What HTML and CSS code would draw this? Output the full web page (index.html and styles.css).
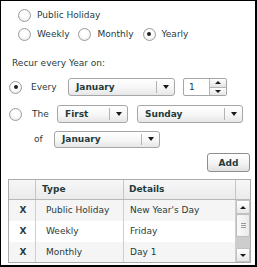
FILE: index.html
```html
<!DOCTYPE html>
<html>
<head>
<meta charset="utf-8">
<link rel="stylesheet" href="styles.css">
</head>
<body>
<div class="frame">
  <div class="opt-row r1">
    <label class="opt"><span class="radio"></span><span>Public Holiday</span></label>
  </div>
  <div class="opt-row r2">
    <label class="opt"><span class="radio"></span><span>Weekly</span></label>
    <label class="opt"><span class="radio"></span><span>Monthly</span></label>
    <label class="opt"><span class="radio checked"></span><span>Yearly</span></label>
  </div>
  <div class="recur">Recur every Year on:</div>
  <div class="line every">
    <span class="radio checked"></span>
    <span class="lbl lbl-every">Every</span>
    <div class="select w-month1"><span class="sel-text">January</span><span class="sel-div"></span><span class="sel-arrow"><i class="tri-down"></i></span></div>
    <div class="spinner"><span class="spin-text">1</span><span class="spin-btns"><span class="spin-up"><i class="tri-up"></i></span><span class="spin-down"><i class="tri-down"></i></span></span></div>
  </div>
  <div class="line the">
    <span class="radio"></span>
    <span class="lbl lbl-the">The</span>
    <div class="select w-first"><span class="sel-text">First</span><span class="sel-div"></span><span class="sel-arrow"><i class="tri-down"></i></span></div>
    <div class="select w-day"><span class="sel-text">Sunday</span><span class="sel-div"></span><span class="sel-arrow"><i class="tri-down"></i></span></div>
  </div>
  <div class="line of">
    <span class="lbl lbl-of">of</span>
    <div class="select w-month2"><span class="sel-text">January</span><span class="sel-div"></span><span class="sel-arrow"><i class="tri-down"></i></span></div>
  </div>
  <div class="add-row"><button class="btn">Add</button></div>
  <div class="grid">
    <div class="head">
      <div class="hc c1"></div>
      <div class="hc c2">Type</div>
      <div class="hc c3">Details</div>
      <div class="hc c4"></div>
    </div>
    <div class="body">
      <div class="rows">
        <div class="row odd"><div class="c c1">X</div><div class="c c2">Public Holiday</div><div class="c c3">New Year's Day</div></div>
        <div class="row"><div class="c c1">X</div><div class="c c2">Weekly</div><div class="c c3">Friday</div></div>
        <div class="row odd"><div class="c c1">X</div><div class="c c2">Monthly</div><div class="c c3">Day 1</div></div>
      </div>
      <div class="sbar">
        <div class="sb-btn"><i class="tri-up"></i></div>
        <div class="sb-thumb"><span class="grip"></span><span class="grip"></span><span class="grip"></span></div>
        <div class="sb-track"></div>
        <div class="sb-btn"><i class="tri-down"></i></div>
      </div>
    </div>
  </div>
</div>
</body>
</html>
```
FILE: styles.css
```css
* { box-sizing: border-box; }
html, body { margin: 0; padding: 0; background: #fff; }
body {
  font-family: "DejaVu Sans", Verdana, sans-serif;
  font-size: 9px;
  color: #1f3b3c;
}
.frame {
  width: 257px;
  height: 267px;
  border: 1px solid #000;
  border-right-width: 2px;
  border-bottom-width: 2px;
  background: #fff;
  display: flex;
  flex-direction: column;
  overflow: hidden;
}
.radio {
  display: inline-block;
  flex: none;
  width: 13px;
  height: 13px;
  border-radius: 50%;
  border: 1px solid #9c9c9c;
  background: radial-gradient(circle at 50% 40%, #ffffff 35%, #e4e4e4 100%);
  position: relative;
}
.radio.checked::after {
  content: "";
  position: absolute;
  left: 3.5px;
  top: 3.5px;
  width: 4px;
  height: 4px;
  border-radius: 50%;
  background: #222;
}
.opt-row {
  display: flex;
  align-items: center;
  height: 18px;
  padding-left: 17px;
}
.r1 { margin-top: 5px; }
.r2 { margin-top: 1px; }
.opt {
  display: flex;
  align-items: center;
  gap: 6px;
  margin-right: 9px;
}
.recur {
  margin-top: 12px;
  height: 16px;
  line-height: 16px;
  padding-left: 11px;
}
.line {
  display: flex;
  align-items: center;
  height: 18px;
  padding-left: 8px;
}
.every { margin-top: 7px; }
.the { margin-top: 9px; }
.of { margin-top: 7px; }
.lbl { flex: none; }
.lbl-every { margin-left: 9px; width: 37px; }
.lbl-the { margin-left: 10px; width: 25px; }
.lbl-of { margin-left: 25px; width: 20px; }
.select {
  flex: none;
  display: flex;
  align-items: stretch;
  height: 18px;
  border: 1px solid #a6a6a6;
  border-radius: 3px;
  background: linear-gradient(#ffffff 0%, #f6f6f6 55%, #e6e6e6 100%);
  font-weight: bold;
}
.sel-text {
  flex: 1;
  padding-left: 7px;
  line-height: 16px;
}
.sel-div {
  width: 1px;
  margin: 2px 0;
  background: #b4b4b4;
}
.sel-arrow {
  width: 17px;
  display: flex;
  align-items: center;
  justify-content: center;
}
.tri-down, .tri-up {
  display: block;
  width: 0;
  height: 0;
  border-left: 3.5px solid transparent;
  border-right: 3.5px solid transparent;
}
.tri-down { border-top: 4px solid #1a1a1a; }
.tri-up { border-bottom: 4px solid #1a1a1a; }
.w-month1 { width: 107px; }
.w-first { width: 71px; }
.w-day { width: 106px; margin-left: 9px; }
.w-month2 { width: 106px; height: 17px; }
.w-month2 .sel-text { line-height: 15px; }
.spinner {
  flex: none;
  margin-left: 8px;
  width: 44px;
  height: 18px;
  display: flex;
  border: 1px solid #a6a6a6;
  border-radius: 2px;
  background: #fff;
}
.spin-text {
  flex: 1;
  padding-left: 5px;
  line-height: 16px;
}
.spin-btns {
  width: 17px;
  display: flex;
  flex-direction: column;
  border-left: 1px solid #b4b4b4;
}
.spin-up, .spin-down {
  flex: 1;
  display: flex;
  align-items: center;
  justify-content: center;
  background: linear-gradient(#ffffff, #e4e4e4);
}
.spin-up { border-bottom: 1px solid #b4b4b4; border-top-right-radius: 2px; }
.spin-down { border-bottom-right-radius: 2px; }
.spin-btns .tri-up, .spin-btns .tri-down {
  border-left-width: 3px;
  border-right-width: 3px;
}
.spin-btns .tri-up { border-bottom-width: 3px; }
.spin-btns .tri-down { border-top-width: 3px; }
.add-row {
  margin-top: 5px;
  height: 19px;
  display: flex;
  justify-content: flex-end;
  padding-right: 5px;
}
.btn {
  width: 43px;
  height: 19px;
  padding: 0;
  border: 1px solid #8e8e8e;
  border-radius: 3px;
  background: linear-gradient(#ffffff 0%, #f4f4f4 55%, #e0e0e0 100%);
  font-family: inherit;
  font-size: 9px;
  font-weight: bold;
  color: #1f3b3c;
}
.grid {
  margin-top: 7px;
  margin-left: 7px;
  width: 243px;
  height: 84px;
  border: 1px solid #ababab;
  display: flex;
  flex-direction: column;
}
.head {
  display: flex;
  height: 20px;
  border-bottom: 1px solid #b8b8b8;
  background: linear-gradient(#f7f7f7, #ebebeb);
  font-weight: bold;
}
.hc {
  line-height: 19px;
  border-right: 1px solid #c6c6c6;
  flex: none;
}
.c1 { width: 27px; }
.c2 { width: 88px; }
.c3 { width: 112px; }
.c4 { width: 14px; border-right: none; }
.hc.c2 { padding-left: 6px; }
.hc.c3 { padding-left: 5px; }
.body {
  display: flex;
  height: 62px;
  overflow: hidden;
}
.rows {
  flex: none;
  width: 227px;
}
.row {
  display: flex;
  height: 21px;
  background: #fff;
}
.row.odd { background: #f5f5f5; }
.c {
  flex: none;
  line-height: 21px;
  border-right: 1px solid #cfcfcf;
}
.c.c1 { text-align: center; font-weight: bold; padding-left: 2px; }
.c.c2 { padding-left: 10px; }
.c.c3 { padding-left: 6px; }
.sbar {
  flex: none;
  width: 14px;
  display: flex;
  flex-direction: column;
  background: #cdcdcd;
}
.sb-btn {
  height: 14px;
  flex: none;
  display: flex;
  align-items: center;
  justify-content: center;
  background: linear-gradient(#ffffff, #e8e8e8);
  border: 1px solid #c2c2c2;
}
.sb-btn .tri-up, .sb-btn .tri-down {
  border-left-width: 3px;
  border-right-width: 3px;
}
.sb-btn .tri-up { border-bottom-width: 3px; }
.sb-btn .tri-down { border-top-width: 3px; }
.sb-thumb {
  height: 23px;
  flex: none;
  display: flex;
  flex-direction: column;
  align-items: center;
  justify-content: center;
  gap: 1px;
  background: linear-gradient(90deg, #fafafa, #ebebeb);
  border: 1px solid #bdbdbd;
  border-radius: 2px;
}
.grip {
  display: block;
  width: 5px;
  height: 1px;
  background: #9a9a9a;
}
.sb-track { flex: 1; }
```
